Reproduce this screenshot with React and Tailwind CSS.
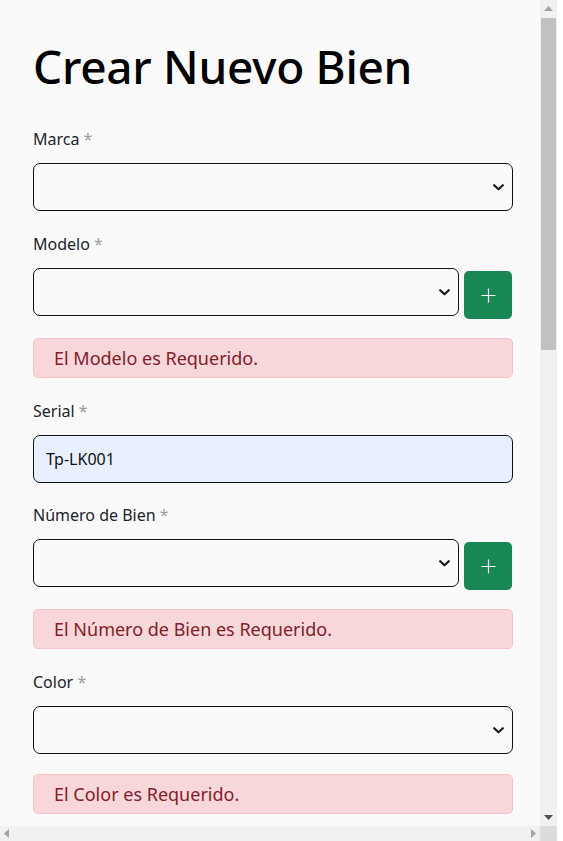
import React from "react";

const font = { fontFamily: '"Noto Sans", "Open Sans", sans-serif' };

function Chevron() {
  return (
    <svg width="11" height="7" viewBox="0 0 11 7" className="mr-[8px]">
      <path d="M1.2 1.2 L5.5 5.3 L9.8 1.2" fill="none" stroke="#1b1b1b" strokeWidth="2.2" strokeLinecap="round" strokeLinejoin="round" />
    </svg>
  );
}

function Plus() {
  return (
    <svg width="15" height="15" viewBox="0 0 15 15">
      <path d="M7.5 0.5 V14.5 M0.5 7.5 H14.5" stroke="#ffffff" strokeWidth="1.2" />
    </svg>
  );
}

function Label({ children }) {
  return (
    <div className="text-[16px] leading-[24px] text-[#212529] mb-[12px]">
      {children} <span className="text-[#9aa0a6]">*</span>
    </div>
  );
}

function Select() {
  return (
    <div className="h-[48px] flex-1 rounded-[7px] border border-[#111] bg-[#fafafa] flex items-center justify-end">
      <Chevron />
    </div>
  );
}

function AddButton() {
  return (
    <div className="ml-[5px] mr-[1px] mt-[3px] w-[48px] h-[48px] rounded-[5px] bg-[#198754] flex items-center justify-center shrink-0">
      <Plus />
    </div>
  );
}

function Alert({ children, mt }) {
  return (
    <div className={`${mt} h-[40px] rounded-[5px] border border-[#f5c2c7] bg-[#f8d7da] text-[#842029] text-[18px] pl-[20px] flex items-center`}>
      {children}
    </div>
  );
}

export default function App() {
  return (
    <div className="w-[563px] h-[841px] bg-white flex flex-col overflow-hidden" style={font}>
      <div className="flex h-[826px]">
        <div className="w-[540px] bg-[#fafafa] overflow-hidden">
          <div className="pl-[33px] pr-[27px]">
            <h1 className="text-[46px] leading-[56px] font-medium text-black pt-[38px] tracking-[-0.3px]">Crear Nuevo Bien</h1>

            <div className="mt-[33px]">
              <Label>Marca</Label>
              <div className="flex"><Select /></div>
            </div>

            <div className="mt-[21px]">
              <Label>Modelo</Label>
              <div className="flex items-start"><Select /><AddButton /></div>
            </div>
            <Alert mt="mt-[19px]">El Modelo es Requerido.</Alert>

            <div className="mt-[21px]">
              <Label>Serial</Label>
              <div className="h-[48px] rounded-[7px] border border-[#111] bg-[#e8f0fe] flex items-center pl-[12px] text-[16px] text-[#111]">
                Tp-LK001
              </div>
            </div>

            <div className="mt-[20px]">
              <Label>Número de Bien</Label>
              <div className="flex items-start"><Select /><AddButton /></div>
            </div>
            <Alert mt="mt-[19px]">El Número de Bien es Requerido.</Alert>

            <div className="mt-[21px]">
              <Label>Color</Label>
              <div className="flex"><Select /></div>
            </div>
            <Alert mt="mt-[20px]">El Color es Requerido.</Alert>
          </div>
        </div>
        <div className="w-[17px] bg-[#f1f1f1] flex flex-col items-center">
          <div className="h-[17px] flex items-center justify-center">
            <svg width="9" height="5" viewBox="0 0 9 5"><path d="M0 5 L4.5 0 L9 5 Z" fill="#a3a3a3" /></svg>
          </div>
          <div className="w-[15px] h-[332px] mt-[1px] bg-[#c1c1c1]" />
          <div className="flex-1" />
          <div className="h-[17px] flex items-center justify-center">
            <svg width="9" height="5" viewBox="0 0 9 5"><path d="M0 0 L4.5 5 L9 0 Z" fill="#505050" /></svg>
          </div>
        </div>
        <div className="flex-1 bg-white" />
      </div>
      <div className="flex h-[15px]">
        <div className="w-[540px] bg-[#f1f1f1] flex items-center justify-between px-[4px]">
          <svg width="5" height="9" viewBox="0 0 5 9"><path d="M5 0 L0 4.5 L5 9 Z" fill="#a3a3a3" /></svg>
          <svg width="5" height="9" viewBox="0 0 5 9"><path d="M0 0 L5 4.5 L0 9 Z" fill="#a3a3a3" /></svg>
        </div>
        <div className="w-[17px] bg-[#dcdcdc]" />
        <div className="flex-1 bg-white" />
      </div>
    </div>
  );
}
